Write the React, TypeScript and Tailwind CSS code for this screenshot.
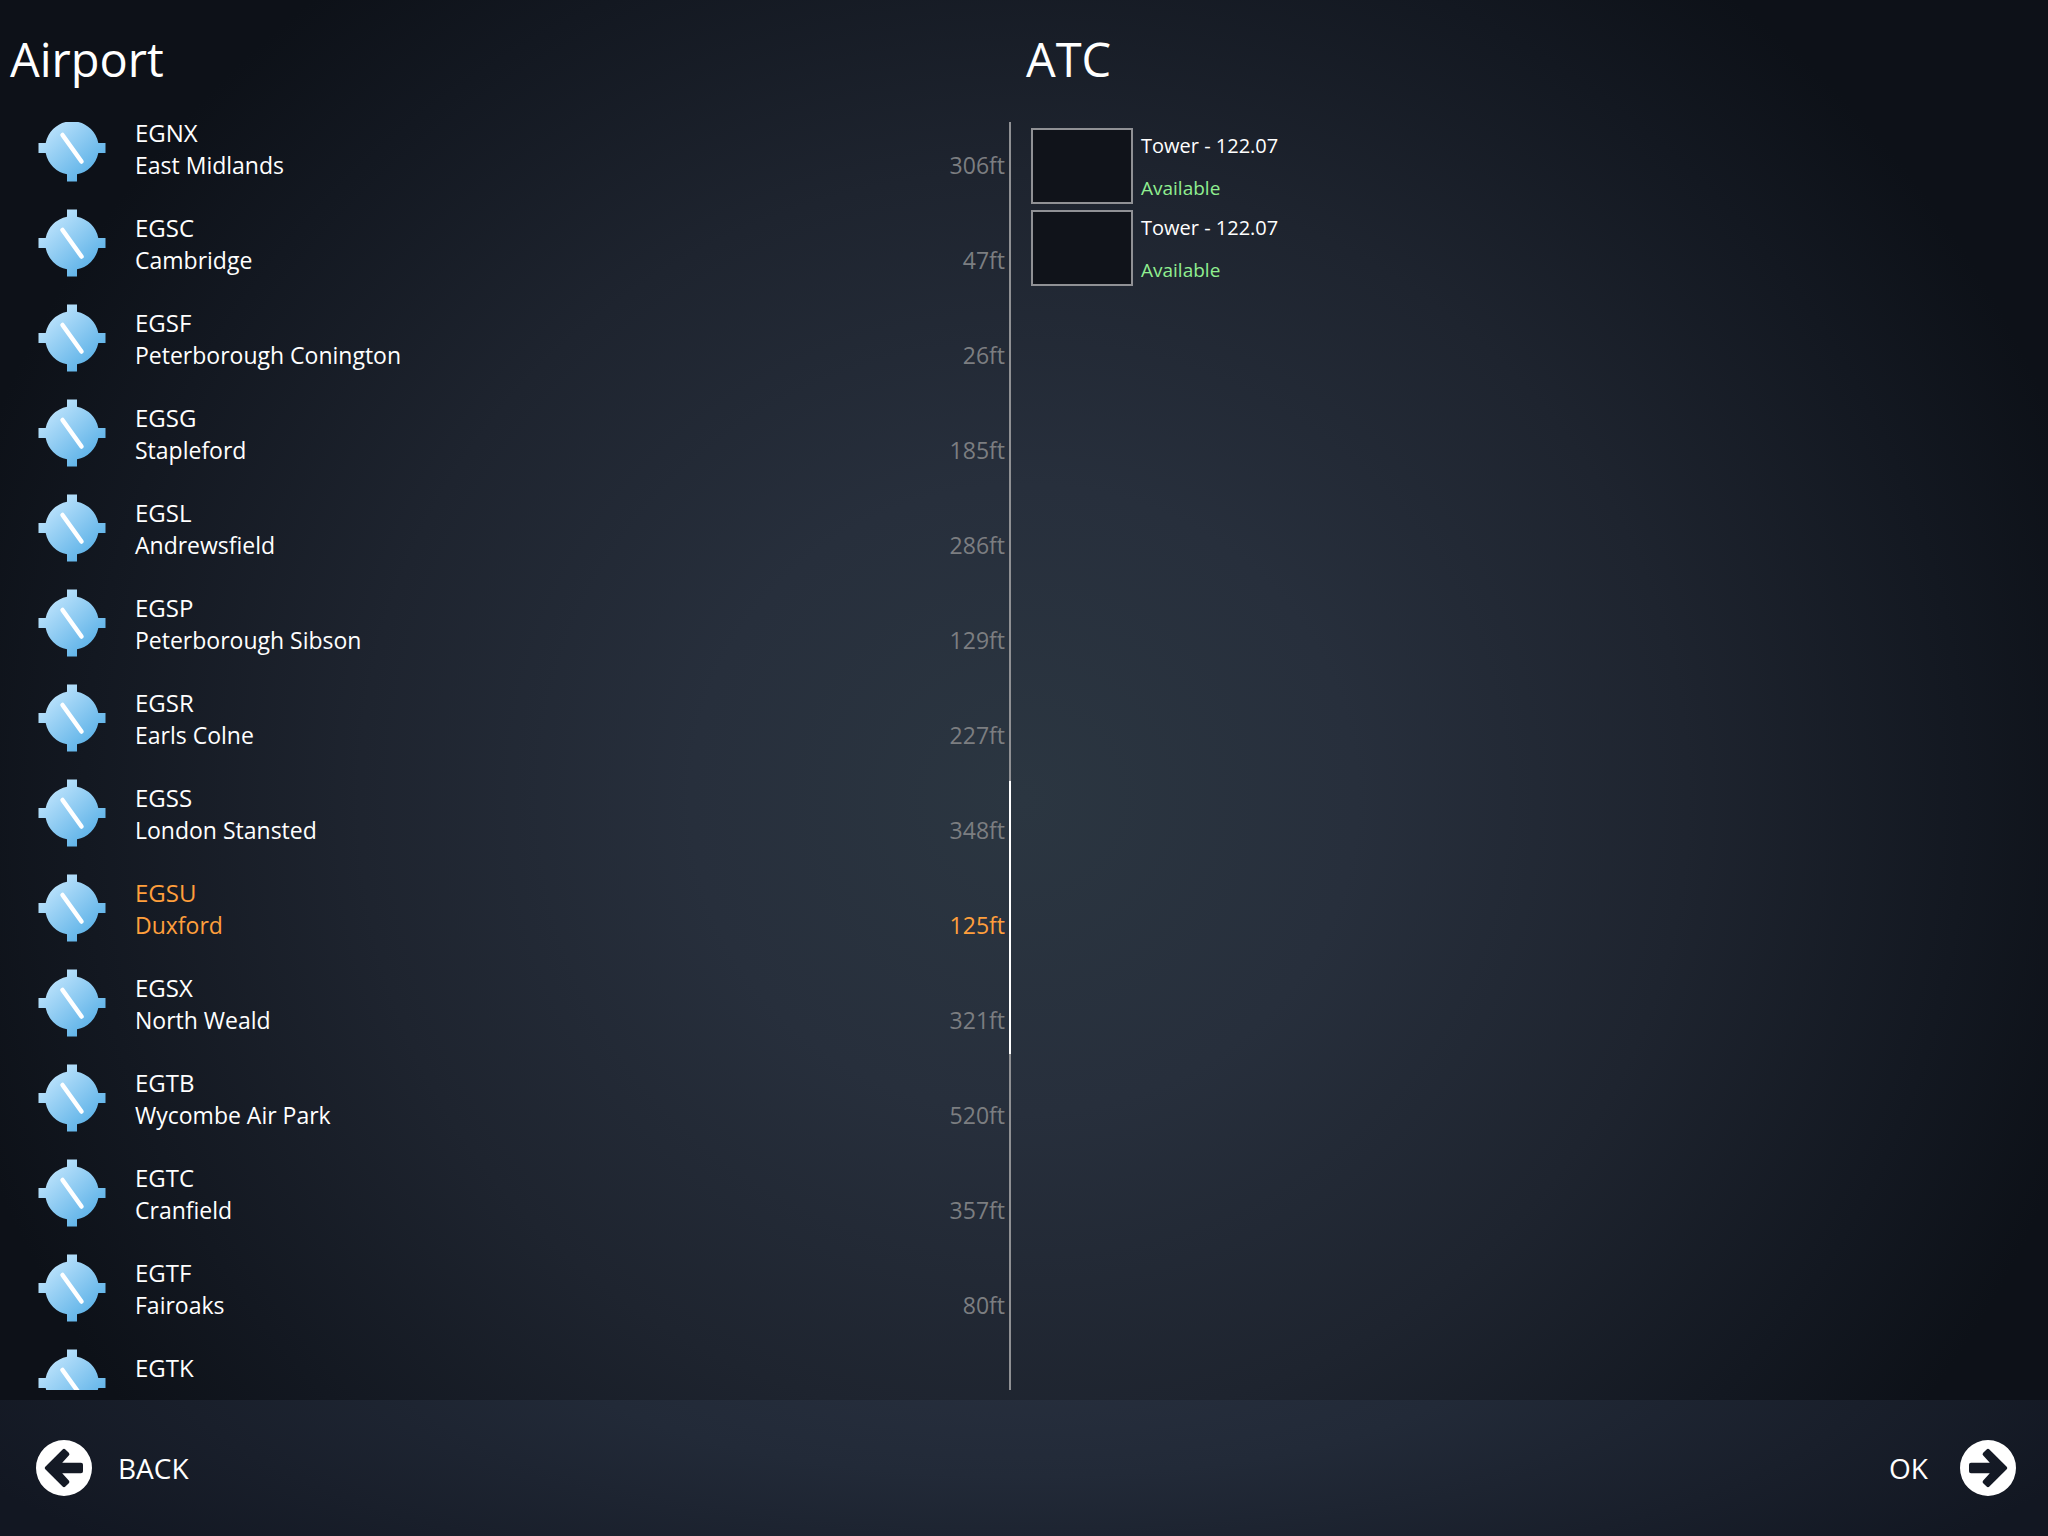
import { useState } from "react";

type Airport = { code: string; name?: string; elevation?: string };

const airports: Airport[] = [
  { code: "EGNX", name: "East Midlands", elevation: "306ft" },
  { code: "EGSC", name: "Cambridge", elevation: "47ft" },
  { code: "EGSF", name: "Peterborough Conington", elevation: "26ft" },
  { code: "EGSG", name: "Stapleford", elevation: "185ft" },
  { code: "EGSL", name: "Andrewsfield", elevation: "286ft" },
  { code: "EGSP", name: "Peterborough Sibson", elevation: "129ft" },
  { code: "EGSR", name: "Earls Colne", elevation: "227ft" },
  { code: "EGSS", name: "London Stansted", elevation: "348ft" },
  { code: "EGSU", name: "Duxford", elevation: "125ft" },
  { code: "EGSX", name: "North Weald", elevation: "321ft" },
  { code: "EGTB", name: "Wycombe Air Park", elevation: "520ft" },
  { code: "EGTC", name: "Cranfield", elevation: "357ft" },
  { code: "EGTF", name: "Fairoaks", elevation: "80ft" },
  { code: "EGTK" },
];

const stations = [
  { id: 1, label: "Tower - 122.07", status: "Available" },
  { id: 2, label: "Tower - 122.07", status: "Available" },
];

function AirportIcon() {
  return (
    <svg viewBox="0 0 68 68" className="size-[68px] shrink-0" aria-hidden="true">
      <defs>
        <linearGradient id="airport-fill" gradientUnits="userSpaceOnUse" x1="14" y1="12" x2="54" y2="56">
          <stop offset="0" stopColor="#b9e1fb" />
          <stop offset="1" stopColor="#5fb3e8" />
        </linearGradient>
      </defs>
      <path
        fill="url(#airport-fill)"
        d="M29 0.5h10v7.2A27 27 0 0 1 60.3 29H67.5v10H60.3A27 27 0 0 1 39 60.3V67.5h-10V60.3A27 27 0 0 1 7.7 39H0.5V29H7.7A27 27 0 0 1 29 7.7z"
      />
      <path d="M24.5 21L43.5 47.5" stroke="#fff" strokeWidth="4.5" strokeLinecap="round" />
    </svg>
  );
}

function ArrowIcon({ flip = false }: { flip?: boolean }) {
  return (
    <svg viewBox="0 0 56 56" className={flip ? "size-14 -scale-x-100" : "size-14"} aria-hidden="true">
      <path
        fill="#fff"
        fillRule="evenodd"
        d="M28 0a28 28 0 1 0 0 56a28 28 0 1 0 0-56zM9.3 26.7L26.6 9.4Q28 8 29.4 9.4L32.8 12.8Q34.2 14.2 32.8 15.6L26.2 22.8H45Q47 22.8 47 24.8V31.2Q47 33.2 45 33.2H26.2L32.8 40.4Q34.2 41.8 32.8 43.2L29.4 46.6Q28 48 26.6 46.6L9.3 29.3Q8 28 9.3 26.7z"
      />
    </svg>
  );
}

export default function App() {
  const [selected, setSelected] = useState("EGSU");

  return (
    <div className="flex h-screen flex-col overflow-hidden bg-[#0d1017] bg-[radial-gradient(ellipse_54%_68%_at_50%_52%,#2b3641_0%,#272f3c_30%,#1e242f_60%,#131821_85%,#0d1118_100%)] font-['Open_Sans','Noto_Sans',sans-serif] text-white">
      <main className="grid min-h-0 flex-1 grid-cols-2 pb-2.5">
        {/* Airport list */}
        <section className="flex min-h-0 flex-col">
          <h1 className="h-[122px] shrink-0 px-2.5 pt-6 text-[47px] leading-[70px]">Airport</h1>
          <div className="flex min-h-0 flex-1 overflow-hidden pr-[13px]">
            <ul className="-mt-4 min-w-0 flex-1 self-start">
              {airports.map((a) => {
                const active = a.code === selected;
                return (
                  <li key={a.code} className="h-[95px]">
                    <button
                      onClick={() => setSelected(a.code)}
                      aria-pressed={active}
                      className={`flex w-full items-start pr-1 pl-[38px] pt-2 text-left ${active ? "text-[#ff9f3c]" : ""}`}
                    >
                      <AirportIcon />
                      <span className="ml-[29px] flex-1 pt-0.5">
                        <span className="block text-[24px] leading-[33px]">{a.code}</span>
                        {a.name && <span className="block text-[23px] leading-[33px]">{a.name}</span>}
                      </span>
                      {a.elevation && (
                        <span className={`pt-[35px] text-[23px] leading-[33px] ${active ? "" : "text-[#7c7e81]"}`}>
                          {a.elevation}
                        </span>
                      )}
                    </button>
                  </li>
                );
              })}
            </ul>
            {/* Scroll position */}
            <div className="w-0.5 bg-[#8f9093]">
              <div className="h-[52%]" />
              <div className="h-[21.5%] bg-white" />
            </div>
          </div>
        </section>

        {/* ATC stations */}
        <section className="flex min-h-0 flex-col">
          <h2 className="h-[122px] shrink-0 pt-6 pl-0.5 text-[47px] leading-[70px]">ATC</h2>
          <ul className="flex flex-col gap-1.5 pt-1.5 pl-[7px]">
            {stations.map((s) => (
              <li key={s.id} className="flex gap-2">
                <div className="h-[76px] w-[102px] border-2 border-[#909195] bg-[#10131a]" />
                <div>
                  <p className="pt-0.5 text-[20px] leading-8">{s.label}</p>
                  <p className="pt-2.5 text-[19px] leading-8 text-[#90ee90]">{s.status}</p>
                </div>
              </li>
            ))}
          </ul>
        </section>
      </main>

      <footer className="flex h-[136px] shrink-0 items-center justify-between bg-[#121620] bg-[radial-gradient(ellipse_56%_240%_at_50%_-40%,#28303f_0%,#222a38_40%,#191f2b_75%,#121722_100%)] pr-8 pl-9 text-[28px]">
        <button className="flex items-center gap-[26px]">
          <ArrowIcon />
          BACK
        </button>
        <button className="flex items-center gap-8">
          OK
          <ArrowIcon flip />
        </button>
      </footer>
    </div>
  );
}
